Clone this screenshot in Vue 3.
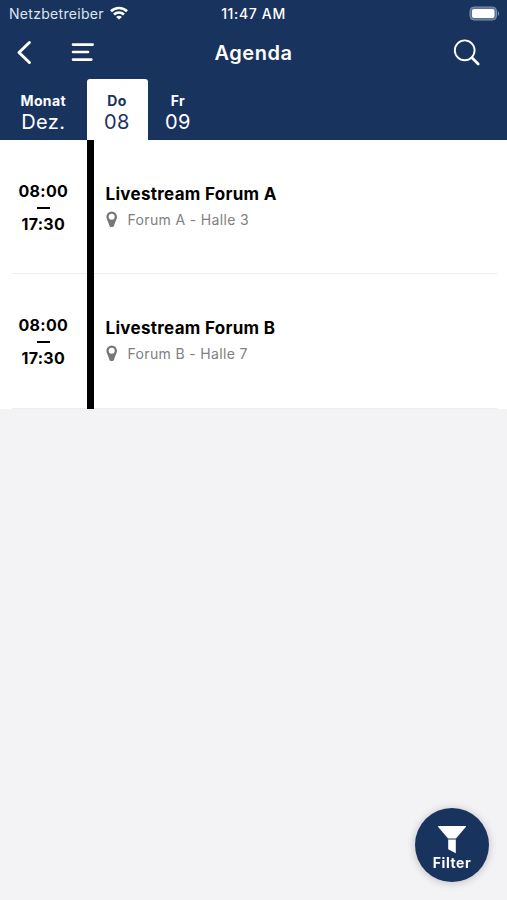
<template>
  <div class="agenda-view">
    <header class="app-header">
      <div class="status-bar">
        <div class="carrier">
          <span>Netzbetreiber</span>
          <svg class="wifi" width="18" height="14" viewBox="0 0 18 14" fill="none" stroke="#fff" stroke-width="2.7">
            <path d="M1 5.3C5.500 .9 12.500 .9 17 5.300"></path>
            <path d="M4 8.600c2.900-2.700 7.100-2.700 10 0"></path>
            <path d="M9 13.600L6.100 10.900c1.700-1.500 4.100-1.500 5.800 0z" fill="#fff" stroke="none"></path>
          </svg>
        </div>
        <span class="clock">11:47 AM</span>
        <svg class="battery" width="31" height="15" viewBox="0 0 31 15">
          <rect x="1" y="1" width="26.5" height="13" rx="4" fill="#5c7093" stroke="#7f8fac" stroke-width="1"></rect>
          <rect x="3" y="3" width="22.5" height="9" rx="2" fill="#fff"></rect>
          <path d="M28.8 5.2c1.7.7 1.7 3.900 0 4.600z" fill="#7f8fac"></path>
        </svg>
      </div>

      <nav class="nav-bar">
        <div class="nav-left">
          <button class="icon-btn" aria-label="Zurück">
            <svg width="16" height="26" viewBox="0 0 16 26" fill="none" stroke="#fff" stroke-width="3" stroke-linecap="round" stroke-linejoin="round">
              <polyline points="13.4 2.5 3 12.5 13.4 22.5"></polyline>
            </svg>
          </button>
          <button class="icon-btn" aria-label="Menü">
            <svg width="24" height="20" viewBox="0 0 24 20" fill="none" stroke="#fff" stroke-width="2.6" stroke-linecap="round">
              <line x1="2" y1="1.6" x2="21.7" y2="1.6"></line>
              <line x1="2" y1="9" x2="17" y2="9"></line>
              <line x1="2" y1="16.6" x2="20.3" y2="16.6"></line>
            </svg>
          </button>
        </div>
        <h1>Agenda</h1>
        <button class="icon-btn search" aria-label="Suchen">
          <svg width="28" height="28" viewBox="0 0 28 28" fill="none" stroke="#fff" stroke-linecap="round">
            <circle cx="11.7" cy="11.3" r="9.9" stroke-width="1.9"></circle>
            <line x1="19" y1="18.800" x2="25.200" y2="25" stroke-width="2.7"></line>
          </svg>
        </button>
      </nav>

      <div class="day-tabs">
        <div class="month">
          <span class="label">Monat</span>
          <span class="value">Dez.</span>
        </div>
        <button
          v-for="day in days"
          :key="day.date"
          class="day"
          :class="{ active: day.date === selected }"
          @click="selected = day.date"
        >
          <span class="label">{{ day.name }}</span>
          <span class="value">{{ day.date }}</span>
        </button>
      </div>
    </header>

    <ul class="session-list">
      <li v-for="session in sessions" :key="session.id" class="session">
        <div class="time">
          <span>{{ session.start }}</span>
          <i class="dash"></i>
          <span>{{ session.end }}</span>
        </div>
        <div class="track"></div>
        <div class="details">
          <h2>{{ session.title }}</h2>
          <p>
            <svg width="12" height="17" viewBox="0 0 12 17">
              <path fill="#777" fill-rule="evenodd" d="M5.700 .4A5.300 5.300 0 0 0 .4 5.700C.4 8.700 2.500 10.500 3.300 14.600c.4 2 4.400 2 4.800 0C8.900 10.500 11 8.700 11 5.700A5.300 5.300 0 0 0 5.700 .4zm0 2.300a3 3 0 1 1 0 6 3 3 0 0 1 0-6z"></path>
            </svg>
            <span>{{ session.place }}</span>
          </p>
        </div>
      </li>
    </ul>

    <button class="filter-btn">
      <svg width="28" height="28" viewBox="0 0 28 28" fill="#fff">
        <path d="M.6 0h26.800c.7 0 .8.6.4 1.100L18 12.600H10L.2 1.100C-.2.600 0 0 .6 0z"></path>
        <path d="M10.200 13.500h7.600V27.200l-7.600-4z"></path>
      </svg>
      <span>Filter</span>
    </button>
  </div>
</template>

<script setup>
import { ref } from 'vue';

const selected = ref('08');

const days = [
  { name: 'Do', date: '08' },
  { name: 'Fr', date: '09' }
];

const sessions = ref([
  { id: 1, start: '08:00', end: '17:30', title: 'Livestream Forum A', place: 'Forum A - Halle 3' },
  { id: 2, start: '08:00', end: '17:30', title: 'Livestream Forum B', place: 'Forum B - Halle 7' }
]);
</script>

<style>
body {
  margin: 0;
  background: #f3f3f6;
}
</style>

<style scoped>
.agenda-view {
  min-height: 900px;
  background: #f3f3f6;
  font-family: Inter, "Liberation Sans", sans-serif;
  color: #000;
}

button {
  padding: 0;
  border: none;
  background: none;
  font-family: inherit;
  color: inherit;
  cursor: pointer;
}

.app-header {
  height: 140px;
  background: #19335f;
  color: #fff;
}

.status-bar {
  display: grid;
  grid-template-columns: 1fr auto 1fr;
  align-items: center;
  height: 27px;
  padding: 0 7px;
  font-size: 14px;
}

.carrier {
  display: flex;
  align-items: center;
  gap: 6px;
  padding-left: 2px;
  color: #dfe4ee;
  letter-spacing: 0.3px;
}

.wifi {
  margin-top: -2px;
}

.clock {
  font-weight: 500;
  letter-spacing: 0.65px;
}

.battery {
  justify-self: end;
}

.nav-bar {
  display: grid;
  grid-template-columns: 1fr auto 1fr;
  align-items: center;
  height: 52px;
  padding: 0 26px 0 26px;
}

.nav-left {
  display: flex;
  align-items: center;
  gap: 39px;
  margin-left: -10px;
}

.icon-btn {
  display: flex;
}

.search {
  justify-self: end;
}

.nav-bar h1 {
  margin: 0;
  font-size: 20px;
  font-weight: 600;
  letter-spacing: 0.5px;
}

.day-tabs {
  display: flex;
  height: 61px;
}

.month,
.day {
  display: flex;
  flex-direction: column;
  align-items: center;
  box-sizing: border-box;
  width: 61px;
  padding-top: 12px;
}

.month {
  width: 86.5px;
}

.day.active {
  background: #fff;
  color: #19335f;
  border-radius: 3px 3px 0 0;
}

.label {
  font-size: 14px;
  line-height: 19px;
  font-weight: 700;
  letter-spacing: 0.4px;
}

.value {
  font-size: 20px;
  line-height: 25px;
  font-weight: 400;
  letter-spacing: 0.4px;
}

.session-list {
  margin: 0;
  padding: 0;
  list-style: none;
  background: #fff;
}

.session {
  display: flex;
  height: 134.5px;
  background: linear-gradient(#ededed, #ededed) 12px 100% / 485px 1px no-repeat;
}

.session:first-child {
  height: 134px;
}

.session:last-child {
  height: 135px;
}

.time {
  display: flex;
  flex-direction: column;
  align-items: center;
  justify-content: center;
  width: 86.5px;
  font-size: 16px;
  line-height: 20px;
  font-weight: 700;
  letter-spacing: 0.3px;
}

.dash {
  width: 13px;
  height: 2px;
  margin: 6px 0 5px;
  background: #000;
}

.track {
  width: 7.5px;
  background: #000;
}

.details {
  padding: 43px 0 0 11.5px;
}

.details h2 {
  margin: 0;
  font-size: 17px;
  line-height: 22px;
  font-weight: 700;
  letter-spacing: 0.3px;
}

.details p {
  display: flex;
  align-items: center;
  gap: 10px;
  margin: 5px 0 0;
  font-size: 14px;
  line-height: 19px;
  letter-spacing: 0.35px;
  color: #808080;
}

.filter-btn {
  position: fixed;
  right: 18px;
  bottom: 18px;
  display: flex;
  flex-direction: column;
  align-items: center;
  width: 74px;
  height: 74px;
  padding-top: 18px;
  border-radius: 50%;
  background: #19335f;
  box-shadow: 0 1px 9px rgba(0, 0, 0, 0.22);
  color: #fff;
}

.filter-btn span {
  font-size: 14px;
  line-height: 17px;
  font-weight: 700;
  letter-spacing: 0.6px;
}
</style>
